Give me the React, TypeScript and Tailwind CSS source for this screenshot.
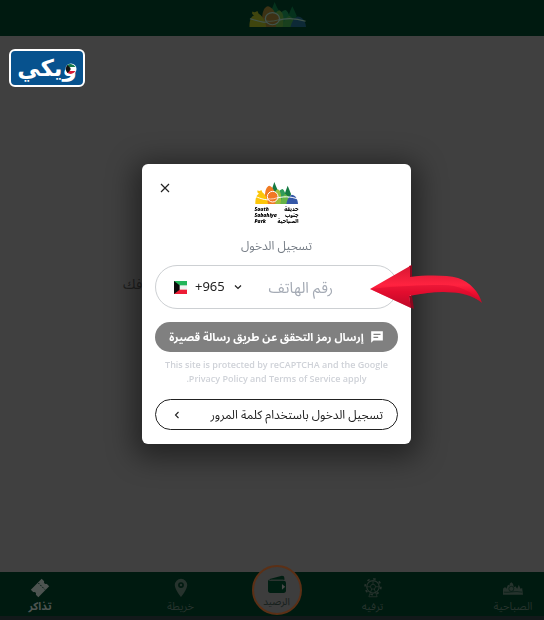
import type { ReactNode } from 'react'

function ParkHills({ className }: { className: string }) {
  return (
    <svg viewBox="0 0 129 66" preserveAspectRatio="none" className={className} aria-hidden="true">
      <path d="M58 0l-4 12-5 14 4 14h12l4-14-6-13z" fill="#167a43" />
      <path d="M98 11l-4 11-5 14 3 10h14l2-10-5-13z" fill="#167a43" />
      <path d="M66 66V44c2-14 10-22 17-23 6 4 9 16 9 26v19z" fill="#2f9b59" />
      <path d="M58 66V38c1-8 5-15 11-16 6 4 9 12 9 22v22z" fill="#9cbf3b" />
      <path d="M30 66V40c0-16 6-28 13-29 10 3 16 15 18 27v28z" fill="#f07a22" />
      <path d="M1 66c0-19 4-28 11-31-5-2-6-6-4-10 4 3 7 2 11-1l3 7c7 6 14 12 17 35z" fill="#fcc60a" />
      <path d="M76 66c1-12 8-27 15-30 8 5 12 14 14 30z" fill="#65b346" />
      <path d="M94 66c2-13 8-24 16-28 10 0 18 11 19 28z" fill="#3558a8" />
      <path d="M2 44c15 5 34 15 60 6 20-8 45-7 66 1" fill="none" stroke="#fff" strokeWidth="3" />
      <circle cx="53" cy="44" r="16" fill="#f27825" stroke="#fff" strokeWidth="3" />
      <path d="M37 50c14 3 24-1 36-5" fill="none" stroke="#fff" strokeWidth="2" />
    </svg>
  )
}

function TicketIcon() {
  return (
    <svg viewBox="0 0 24 24" className="size-5" aria-hidden="true">
      <path fill="currentColor" d="M14 1l3 3c-1 2 1 4 3 3l3 3L10 23l-3-3c1-2-1-4-3-3l-3-3z" />
      <path d="M10 6l8 8" fill="none" stroke="#001a10" strokeWidth="1.2" strokeDasharray="2 1.500" />
    </svg>
  )
}

function PinIcon() {
  return (
    <svg viewBox="0 0 24 24" className="size-5" fill="currentColor" aria-hidden="true">
      <path fillRule="evenodd" d="M12 1a7.500 7.500 0 0 0-7.500 7.500C4.500 14 12 23 12 23s7.500-9 7.500-14.500A7.500 7.500 0 0 0 12 1zm0 4a3 3 0 1 1 0 7 3 3 0 0 1 0-7z" />
      <circle cx="12" cy="8.500" r="1.500" />
    </svg>
  )
}

function WheelIcon() {
  return (
    <svg viewBox="0 0 24 24" className="size-5" fill="none" stroke="currentColor" aria-hidden="true">
      <circle cx="12" cy="10.500" r="7.500" strokeWidth="1.500" />
      <circle cx="12" cy="10.500" r="9.500" strokeWidth="2" strokeDasharray="3 4.460" />
      <circle cx="12" cy="10.500" r="3" />
      <path d="M12 3v5M4.500 10.500H9M15 10.500h4.500M10.500 13L7 22.500h10L13.500 13" />
    </svg>
  )
}

function SkylineIcon() {
  return (
    <svg viewBox="0 0 24 24" className="size-5" fill="currentColor" aria-hidden="true">
      <path d="M0 20v-6c0-2 1-3 3-3l1 2 2-5 2 1V7l2-2 2 2 1 4 2-1 2 3 2-5 2 5 2-1 1 8z" />
      <path d="M1 17c6 1 13-2 22 0" stroke="#001a10" strokeWidth="0.8" fill="none" />
      <circle cx="10" cy="13" r="3" stroke="#001a10" strokeWidth="0.8" fill="none" />
    </svg>
  )
}

function WalletIcon() {
  return (
    <svg viewBox="0 0 24 22" className="h-[18px] w-5" aria-hidden="true">
      <path d="M3 5l15-4c2 0 3 1 3 3v2H3z" fill="#001e12" />
      <path d="M4 6h16" stroke="#3a3d3b" strokeWidth="0.8" />
      <path d="M1 5c0 2 1 2 3 2h16c2 0 3 1 3 3v9c0 2-1 3-3 3H4c-2 0-3-1-3-3z" fill="#001e12" />
      <path d="M18 11v7l4-3.500z" fill="#4a4a4a" />
    </svg>
  )
}

function KuwaitFlag() {
  return (
    <svg viewBox="0 0 39 39" className="size-[13px]" aria-hidden="true">
      <path fill="#f2f2f2" d="M0 0h39v39H0z" />
      <path fill="#24b45a" d="M0 0h39v13H0z" />
      <path fill="#ed1c35" d="M0 26h39v13H0z" />
      <path fill="#0c0c0c" d="M0 0l17 13v13L0 39z" />
    </svg>
  )
}

function Arrow() {
  return (
    <svg viewBox="0 0 114 46" className="absolute -top-0.5 left-[213px] h-[46px] w-[114px]" aria-hidden="true">
      <defs>
        <linearGradient id="arrow-red" x1="0" y1="0" x2="0" y2="1">
          <stop offset="0" stopColor="#d81632" />
          <stop offset=".45" stopColor="#ff2340" />
          <stop offset=".62" stopColor="#f00f30" />
          <stop offset="1" stopColor="#b00a26" />
        </linearGradient>
      </defs>
      <path d="M40 2l3-1v12h-3zM40 32h3l2 13-4-2z" fill="#89071e" />
      <path d="M1 25L41 2v11c17-2 36-2 48 1 12 4 21 14 24 25-9-8-22-11-39-11-12 0-23 2-34 4l2 12z" fill="url(#arrow-red)" />
      <path d="M1 25c28-3 50-4 72-4 17 0 29 6 39 17-10-7-22-10-38-10-12 0-23 2-34 4l2 12z" fill="#d00a2c" opacity=".4" />
    </svg>
  )
}

function NavItem({ label, active, children }: { label: string; active?: boolean; children: ReactNode }) {
  return (
    <a
      href="#"
      className={
        active
          ? 'flex w-[62px] flex-col items-center pt-1.5 text-[11px] leading-4 font-bold whitespace-nowrap text-[#4d5451]'
          : 'flex w-[62px] flex-col items-center pt-1.5 text-[11px] leading-4 whitespace-nowrap text-[#26332d]'
      }
    >
      {children}
      <span dir="rtl">{label}</span>
    </a>
  )
}

function LoginDialog() {
  return (
    <div className="fixed inset-0 flex items-center justify-center pb-3 pl-[9px]">
      <div
        role="dialog"
        aria-label="تسجيل الدخول"
        className="w-[269px] rounded-md bg-white px-[13px] pt-4 pb-3.5 shadow-[0_6px_28px_8px_rgba(0,0,0,0.45)]"
      >
        <div className="grid grid-cols-[20px_1fr_20px] items-start">
          <button type="button" aria-label="إغلاق" className="flex h-4 w-5 items-center justify-center text-[#222]">
            <svg viewBox="0 0 10 10" className="size-2.5" stroke="currentColor" strokeWidth="1.2" aria-hidden="true">
              <path d="M1 1l8 8M9 1L1 9" />
            </svg>
          </button>
          <div className="flex flex-col items-center pt-0.5">
            <ParkHills className="h-[22px] w-[43px]" />
            <div className="mt-0.5 flex h-5 w-[44px] justify-between text-[5px] leading-[6px] font-black whitespace-nowrap text-black">
              <p className="italic">South<br />Sabahiya<br />Park</p>
              <p dir="rtl">حديقة<br />جنوب<br />الصباحية</p>
            </div>
          </div>
        </div>
        <h1 dir="rtl" className="mt-2.5 text-center text-[12px] leading-5 text-[#777e87]">تسجيل الدخول</h1>
        <div className="relative mt-[9px] flex h-11 items-center rounded-full border border-[#cdd0d3] pl-[18px]">
          <KuwaitFlag />
          <button type="button" className="ml-2 flex items-center gap-2 text-[13px] text-[#222]">
            +965
            <svg viewBox="0 0 10 10" className="size-2.5" fill="none" stroke="currentColor" strokeWidth="1.2" aria-hidden="true">
              <path d="M2 3.500l3 3 3-3" />
            </svg>
          </button>
          <input
            type="tel"
            dir="rtl"
            aria-label="رقم الهاتف"
            placeholder="رقم الهاتف"
            className="mr-16 ml-2 min-w-0 flex-1 bg-transparent text-[15px] leading-6 outline-none placeholder:text-[#a5abb5]"
          />
          <Arrow />
        </div>
        <button
          type="button"
          dir="rtl"
          className="mt-[13px] flex h-[30px] w-full items-center justify-center gap-1.5 rounded-full bg-[#808080] text-[11px] font-bold whitespace-nowrap text-white"
        >
          <svg viewBox="0 0 24 24" className="size-3.5 shrink-0" aria-hidden="true">
            <path fill="currentColor" d="M2 2h20v16H6l-4 4z" />
            <path d="M6 7.500h12M6 12.500h8" stroke="#808080" strokeWidth="2" />
          </svg>
          إرسال رمز التحقق عن طريق رسالة قصيرة
        </button>
        <p dir="rtl" className="mt-1.5 text-center font-['Open_Sans','DejaVu_Sans',sans-serif] text-[9px] leading-[14px] font-semibold text-[#cfd2d8]">
          This site is protected by reCAPTCHA and the Google Privacy Policy and Terms of Service apply.
        </p>
        <button
          type="button"
          dir="rtl"
          className="mt-[13px] flex h-[31px] w-full items-center justify-between rounded-full border border-[#222] pr-3.5 pl-[18px] text-[12px] whitespace-nowrap text-[#222]"
        >
          تسجيل الدخول باستخدام كلمة المرور
          <svg viewBox="0 0 8 10" className="h-2 w-1.5" fill="none" stroke="currentColor" strokeWidth="1.5" aria-hidden="true">
            <path d="M6 1L2 5l4 4" />
          </svg>
        </button>
      </div>
    </div>
  )
}

export default function App() {
  return (
    <div className="flex min-h-screen flex-col bg-[#404040] font-['Noto_Sans','Noto_Sans_Arabic','Noto_Kufi_Arabic','DejaVu_Sans',sans-serif]">
      <header className="flex h-9 justify-center bg-[#001a10] pt-0.5 pl-2.5">
        <ParkHills className="h-[25px] w-[57px] opacity-25" />
      </header>
      <main className="flex flex-1 flex-col px-[9px] pt-[13px]">
        <a
          href="#"
          dir="rtl"
          className="relative flex h-[38px] w-[76px] items-center justify-center rounded-md border-2 border-white bg-[#07528e] font-['DejaVu_Sans',sans-serif] text-[23px] leading-none font-bold text-white"
        >
          <span>ويكي</span>
          <svg viewBox="0 0 24 24" className="absolute top-3 right-1.5 size-3" aria-hidden="true">
            <circle cx="12" cy="12" r="11" fill="#fff" />
            <path d="M4 5a11 11 0 0 1 17 3H7z" fill="#13784a" />
            <path d="M7 16h14a11 11 0 0 1-17 3z" fill="#d71d37" />
            <path d="M5 4l6 6v4l-6 6a11 11 0 0 1 0-16z" fill="#111" />
          </svg>
        </a>
        <p dir="rtl" className="mt-[185px] ml-[114px] self-start text-[14px] leading-6 text-[#202020]">فك</p>
      </main>
      <nav className="flex h-12 justify-between border-b-4 border-[#12191a] bg-[#001a10] pl-[9px]">
        <NavItem label="تذاكر" active><TicketIcon /></NavItem>
        <div className="flex gap-[34px]">
          <NavItem label="خريطة"><PinIcon /></NavItem>
          <a
            href="#"
            className="mx-1.5 -mt-[7px] flex size-[50px] flex-col items-center rounded-full border-2 border-[#5b3016] bg-[#3d3d3d] pt-2 text-[10px] leading-4 text-[#17201c]"
          >
            <WalletIcon />
            <span dir="rtl">الرصيد</span>
          </a>
          <NavItem label="ترفيه"><WheelIcon /></NavItem>
        </div>
        <NavItem label="الصباحية"><SkylineIcon /></NavItem>
      </nav>
      <LoginDialog />
    </div>
  )
}
